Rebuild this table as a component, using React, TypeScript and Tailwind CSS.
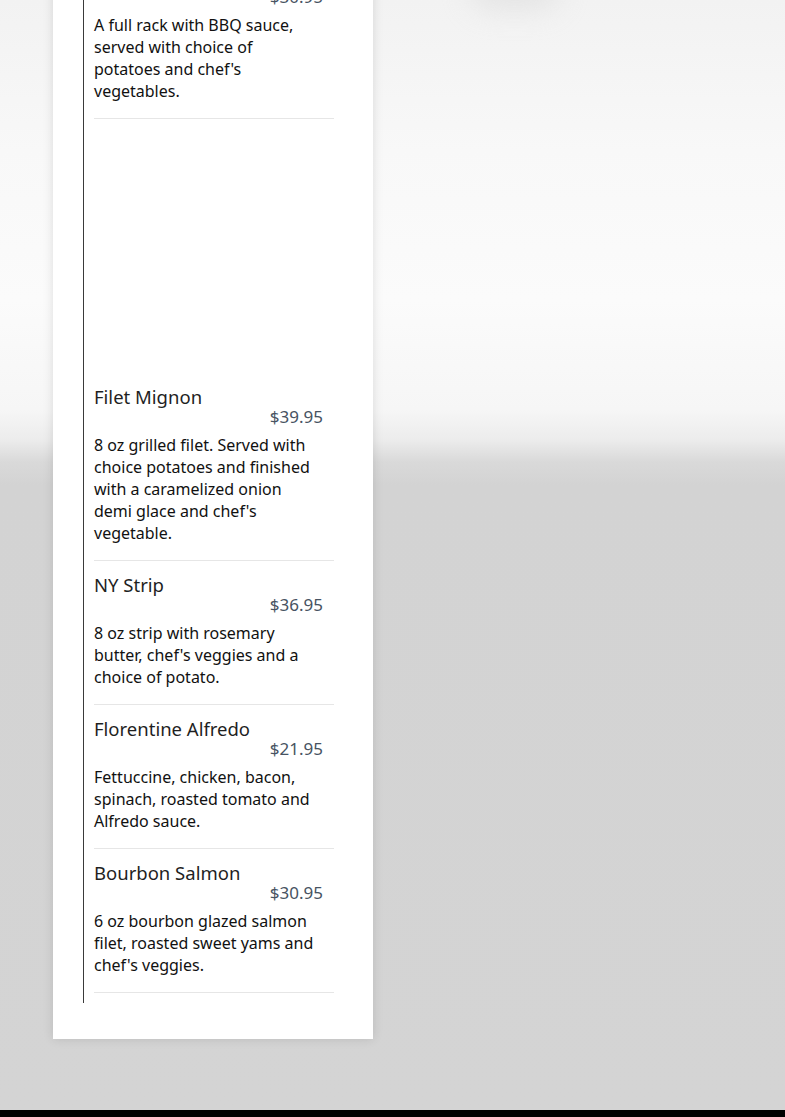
import React from "react";

type Item = { name: string; price: string; desc: string; gapAfter?: boolean };

const items: Item[] = [
  {
    name: "Baby Back Ribs",
    price: "$30.95",
    desc: "A full rack with BBQ sauce, served with choice of potatoes and chef's vegetables.",
    gapAfter: true,
  },
  {
    name: "Filet Mignon",
    price: "$39.95",
    desc: "8 oz grilled filet. Served with choice potatoes and finished with a caramelized onion demi glace and chef's vegetable.",
  },
  {
    name: "NY Strip",
    price: "$36.95",
    desc: "8 oz strip with rosemary butter, chef's veggies and a choice of potato.",
  },
  {
    name: "Florentine Alfredo",
    price: "$21.95",
    desc: "Fettuccine, chicken, bacon, spinach, roasted tomato and Alfredo sauce.",
  },
  {
    name: "Bourbon Salmon",
    price: "$30.95",
    desc: "6 oz bourbon glazed salmon filet, roasted sweet yams and chef's veggies.",
  },
];

function MenuItem({ item }: { item: Item }) {
  return (
    <>
      <div className="pt-[14px] pb-[16px] border-b border-[#e6e6e6]">
        <div className="text-[18.5px] leading-[20px] text-[#1f1f1f]">{item.name}</div>
        <div className="text-right pr-[11px] text-[17px] leading-[20px] text-[#475362]">
          {item.price}
        </div>
        <p className="mt-[7px] w-[222px] text-[16px] leading-[22px] text-[#111]">{item.desc}</p>
      </div>
      {item.gapAfter && <div className="h-[254px]" />}
    </>
  );
}

export default function App() {
  return (
    <div
      className="w-full h-[1117px] overflow-hidden flex flex-col bg-[linear-gradient(to_bottom,#f2f2f2_0px,#f8f8f8_150px,#fbfbfb_300px,#f6f6f6_410px,#ececec_440px,#d9d9d9_462px,#d3d3d3_485px,#d4d4d4_100%)]"
      style={{ fontFamily: '"Noto Sans", "Open Sans", sans-serif' }}
    >
      <div className="flex-1 relative pl-[53px]">
        <div className="absolute left-[470px] top-[-30px] w-[90px] h-[40px] rounded-full bg-[#dcdcdc] blur-[14px] opacity-60" />
        <div className="relative w-[320px] -mt-[47px] bg-white pl-[30px] pr-[39px] pb-[36px] shadow-[0_0_10px_rgba(0,0,0,0.12)]">
          <div className="border-l border-[#3a3a3a] pl-[10px] pb-[10px]">
            {items.map((it) => (
              <MenuItem key={it.name} item={it} />
            ))}
          </div>
        </div>
      </div>
      <div className="h-[7px] bg-black" />
    </div>
  );
}
